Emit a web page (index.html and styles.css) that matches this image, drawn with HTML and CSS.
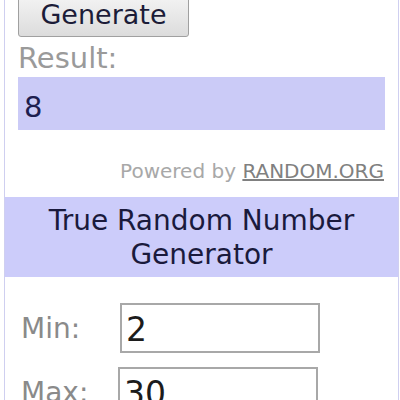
FILE: index.html
```html
<!DOCTYPE html>
<html>
<head>
<meta charset="UTF-8">
<title>True Random Number Generator</title>
<link rel="stylesheet" href="styles.css">
</head>
<body>

<!-- widget -->
<div class="widget">

	<!-- result -->
	<div class="result-panel">
		<button class="btn-generate" type="button">Generate</button>
		<p class="result-label">Result:</p>
		<div class="result-box">8</div>
		<p class="powered">Powered by <a href="#">RANDOM.ORG</a></p>
	</div>
	<!-- /result -->

	<h1 class="widget-title">True Random Number Generator</h1>

	<!-- form -->
	<div class="form-panel">
		<div class="form-row">
			<label class="form-label">Min:</label>
			<input class="form-input" type="text" value="2">
		</div>
		<div class="form-row form-row-max">
			<label class="form-label">Max:</label>
			<input class="form-input" type="text" value="30">
		</div>
	</div>
	<!-- /form -->

</div>
<!-- /widget -->

</body>
</html>
```

FILE: styles.css
```css
/* -------------------------------------
		GLOBAL
------------------------------------- */
* {
	margin: 0;
	padding: 0;
	box-sizing: border-box;
	font-family: "DejaVu Sans", Verdana, sans-serif;
}

body {
	background: #fff;
	width: 400px;
	height: 400px;
	overflow: hidden;
}

/* -------------------------------------
		WIDGET
------------------------------------- */
.widget {
	width: 395px;
	margin: -9px 0 0 4px;
	border-left: 1px solid #cfcff0;
	border-right: 1px solid #cfcff0;
}

/* -------------------------------------
		RESULT
------------------------------------- */
.result-panel {
	padding: 0 12px 14px 13px;
	display: flex;
	flex-direction: column;
	align-items: flex-start;
}

.btn-generate {
	width: 171px;
	height: 46px;
	font-size: 27px;
	color: #1c1c38;
	background: linear-gradient(#f6f6f6, #dcdcdc);
	border: 1px solid #a0a0a0;
	border-radius: 3px;
}

.result-label {
	margin-top: 4px;
	font-size: 29px;
	line-height: 34px;
	color: #9a9a9a;
}

.result-box {
	margin-top: 2px;
	width: 367px;
	height: 53px;
	padding: 8px 0 0 6px;
	font-size: 29px;
	line-height: 45px;
	color: #1e1e50;
	background: #cbcbf7;
}

.powered {
	align-self: flex-end;
	margin: 29px 2px 0 0;
	font-size: 20px;
	line-height: 24px;
	color: #a8a8a8;
}

.powered a {
	color: #808080;
}

/* -------------------------------------
		TITLE
------------------------------------- */
.widget-title {
	padding: 7px 0 5px;
	font-size: 28px;
	font-weight: normal;
	line-height: 34px;
	text-align: center;
	color: #1a1a3c;
	background: #ccccfa;
}

/* -------------------------------------
		FORM
------------------------------------- */
.form-panel {
	padding: 26px 0 0 16px;
	display: flex;
	flex-direction: column;
	gap: 14px;
}

.form-row {
	display: flex;
	align-items: center;
}

.form-label {
	width: 99px;
	font-size: 28px;
	color: #8a8a8a;
}

.form-row-max .form-label {
	width: 97px;
}

.form-input {
	width: 200px;
	height: 50px;
	padding: 2px 4px 0;
	font-size: 33px;
	color: #1c1c1c;
	border: 2px solid #a8a8a8;
	background: #fff;
}
```
